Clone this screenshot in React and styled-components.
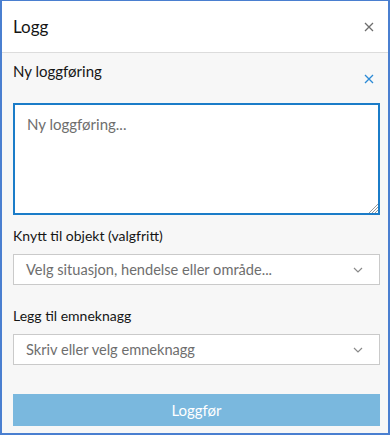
import React from "react";
import styled, { createGlobalStyle } from "styled-components";

const GlobalStyle = createGlobalStyle`
  html, body {
    margin: 0;
    padding: 0;
    background: #ffffff;
  }
  body {
    font-family: Lato, "Open Sans", sans-serif;
  }
`;

const Panel = styled.div`
  box-sizing: border-box;
  width: 390px;
  height: 435px;
  border: 2px solid #4a7fd0;
  border-top-width: 1px;
  display: flex;
  flex-direction: column;
  background: #f7f7f7;
  overflow: hidden;
`;

const Header = styled.div`
  display: flex;
  align-items: center;
  justify-content: space-between;
  height: 51px;
  padding: 0 9px 0 11px;
  background: #ffffff;
  border-bottom: 1px solid #dcdcdc;
`;

const Title = styled.h1`
  margin: 0;
  font-size: 17px;
  font-weight: 400;
  color: #151515;
`;

const CloseButton = styled.button`
  display: flex;
  align-items: center;
  justify-content: center;
  width: 20px;
  height: 20px;
  padding: 0;
  border: none;
  background: none;
  color: ${p => p.$color};
`;

const Body = styled.div`
  display: flex;
  flex-direction: column;
  padding: 0 8px 0 11px;
`;

const SubHeader = styled.div`
  display: flex;
  justify-content: space-between;
  align-items: flex-start;
  padding-top: 8px;
  height: 42px;
`;

const SubTitle = styled.h2`
  margin: 0;
  font-size: 15px;
  font-weight: 400;
  color: #151515;
  line-height: 20px;
`;

const SubClose = styled(CloseButton)`
  margin-top: 8px;
  margin-right: 1px;
`;

const TextAreaWrap = styled.div`
  position: relative;
`;

const TextArea = styled.textarea`
  box-sizing: border-box;
  display: block;
  width: 367px;
  height: 112px;
  padding: 10px 12px;
  border: 2px solid #1b7cc8;
  background: #ffffff;
  font-family: inherit;
  font-size: 15px;
  color: #151515;
  resize: none;
  outline: none;
  &::placeholder {
    color: #6e6e6e;
  }
`;

const Grip = styled.svg`
  position: absolute;
  right: 2px;
  bottom: 2px;
`;

const Label = styled.label`
  display: block;
  margin: ${p => p.$top}px 0 9px;
  font-size: 14px;
  color: #151515;
  line-height: 18px;
`;

const Select = styled.div`
  box-sizing: border-box;
  display: flex;
  align-items: center;
  justify-content: space-between;
  width: 367px;
  height: 31px;
  padding: 0 12px;
  border: 1px solid #cacaca;
  background: #ffffff;
  font-size: 14.6px;
  color: #6e6e6e;
`;

const Chevron = styled.svg`
  color: #8a8a8a;
  margin-right: 4px;
`;

const Submit = styled.button`
  box-sizing: border-box;
  width: 367px;
  height: 32px;
  margin-top: 29px;
  border: none;
  background: #7ab8de;
  color: #ffffff;
  font-family: inherit;
  font-size: 15px;
`;

const XIcon = ({ size = 10 }) => (
  <svg width={size} height={size} viewBox="0 0 10 10" fill="none">
    <path d="M1 1L9 9M9 1L1 9" stroke="currentColor" strokeWidth="1.3" />
  </svg>
);

const Dropdown = ({ children }) => (
  <Select>
    <span>{children}</span>
    <Chevron width="10" height="6" viewBox="0 0 10 6" fill="none">
      <path d="M1 1L5 5L9 1" stroke="currentColor" strokeWidth="1.2" />
    </Chevron>
  </Select>
);

export default function App() {
  return (
    <>
      <GlobalStyle />
      <Panel>
        <Header>
          <Title>Logg</Title>
          <CloseButton $color="#6e6e6e">
            <XIcon />
          </CloseButton>
        </Header>
        <Body>
          <SubHeader>
            <SubTitle>Ny loggføring</SubTitle>
            <SubClose $color="#2b8ad6">
              <XIcon />
            </SubClose>
          </SubHeader>
          <TextAreaWrap>
            <TextArea placeholder="Ny loggføring..." />
            <Grip width="10" height="10" viewBox="0 0 10 10">
              <path d="M10 1L1 10M10 4L4 10M10 7L7 10" stroke="#9a9a9a" strokeWidth="1" />
            </Grip>
          </TextAreaWrap>
          <Label $top={12}>Knytt til objekt (valgfritt)</Label>
          <Dropdown>Velg situasjon, hendelse eller område...</Dropdown>
          <Label $top={22}>Legg til emneknagg</Label>
          <Dropdown>Skriv eller velg emneknagg</Dropdown>
          <Submit>Loggfør</Submit>
        </Body>
      </Panel>
    </>
  );
}
